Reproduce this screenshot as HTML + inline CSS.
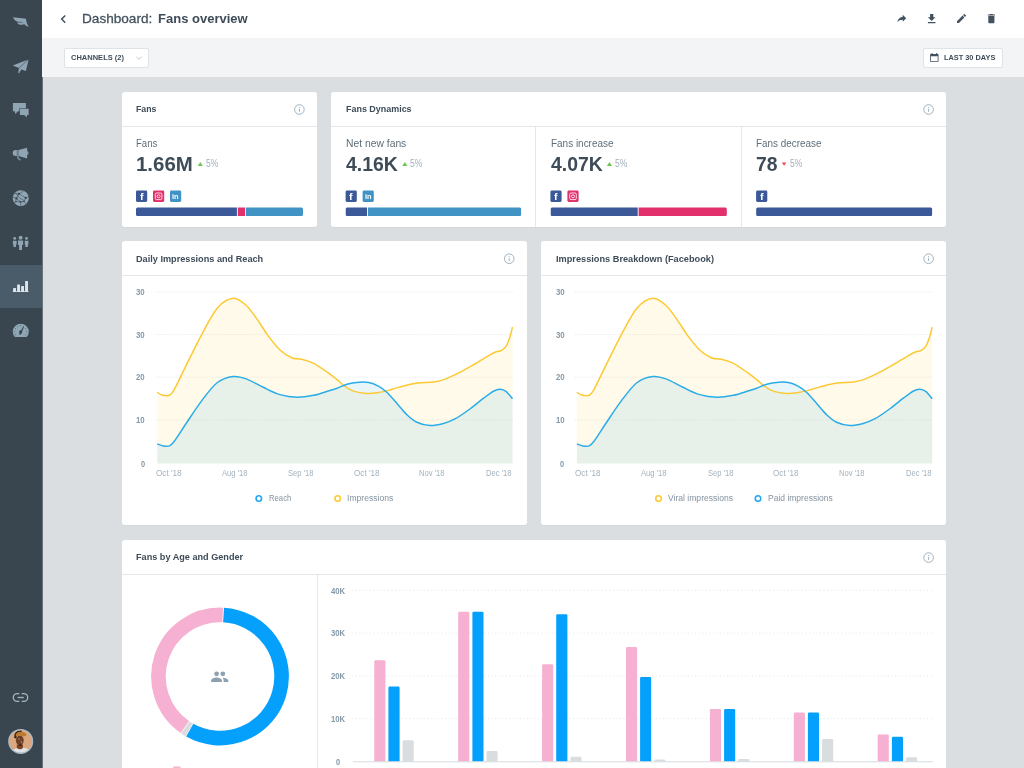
<!DOCTYPE html>
<html lang="en">
<head>
<meta charset="utf-8">
<title>Dashboard: Fans overview</title>
<style>
*{box-sizing:border-box;margin:0;padding:0}
html,body{width:1024px;height:768px;overflow:hidden}
body{background:#dadee1;font-family:"Liberation Sans",sans-serif;position:relative}
.abs{position:absolute}
.sidebar{left:0;top:0;width:42px;height:768px;background:#39464f}
.sidebar-edge{left:42px;top:0;width:1px;height:768px;background:rgba(57,70,79,.7)}
.sidebar .active{left:0;top:264.6px;width:42px;height:43.8px;background:#4a5c69}
.header{left:42px;top:0;width:982px;height:37.6px;background:#fff}
.filters{left:42px;top:37.6px;width:982px;height:39.7px;background:#f3f4f6}
.btn{background:#fff;border:0.8px solid #dfe3e6;border-radius:2px}
.card{background:#fff;border-radius:2.8px;box-shadow:0 0.5px 0.6px rgba(40,55,70,.07)}
.hl{height:0.9px;background:#e3e6ea}
.vl{width:0.9px;background:#e3e6ea}
.t{position:absolute;white-space:nowrap;line-height:1;transform-origin:0 0;font-family:"Liberation Sans",sans-serif}
.seg{position:absolute;top:207.6px;height:8.4px}
.soc{position:absolute;top:190.7px;width:11.2px;height:11.2px;border-radius:1.3px}
svg.ov{position:absolute;left:0;top:0;width:1024px;height:768px;overflow:visible}
</style>
</head>
<body>
<!-- sidebar -->
<nav class="abs sidebar"><div class="abs active"></div></nav>
<div class="abs sidebar-edge"></div>
<!-- top bar -->
<header class="abs header"></header>
<section class="abs filters"></section>
<div class="abs btn" style="left:64.3px;top:48.3px;width:85.2px;height:19.3px"></div>
<div class="abs btn" style="left:923.3px;top:48.3px;width:79.3px;height:19.3px"></div>

<!-- cards -->
<div class="abs card" style="left:121.6px;top:91.6px;width:195.6px;height:135.4px"></div>
<div class="abs card" style="left:331.2px;top:91.6px;width:614.9px;height:135.4px"></div>
<div class="abs card" style="left:121.6px;top:240.7px;width:405.4px;height:284px"></div>
<div class="abs card" style="left:541.2px;top:240.7px;width:404.9px;height:284px"></div>
<div class="abs card" style="left:121.6px;top:539.7px;width:824.5px;height:240px"></div>
<!-- dividers -->
<div class="abs hl" style="left:121.6px;top:126.1px;width:195.6px"></div>
<div class="abs hl" style="left:331.2px;top:126.1px;width:614.9px"></div>
<div class="abs vl" style="left:535.4px;top:126.1px;height:100.9px"></div>
<div class="abs vl" style="left:740.9px;top:126.1px;height:100.9px"></div>
<div class="abs hl" style="left:121.6px;top:274.9px;width:405.4px"></div>
<div class="abs hl" style="left:541.2px;top:274.9px;width:404.9px"></div>
<div class="abs hl" style="left:121.6px;top:574.1px;width:824.5px"></div>
<div class="abs vl" style="left:317.1px;top:574.1px;height:200px"></div>

<!-- social icons -->

<!-- distribution bars -->

<!-- vector overlay: icons + charts -->
<svg class="ov" viewBox="0 0 1024 768">
<g id="side-icons" fill="#8fa5b4">
<!-- wing logo -->
<path d="M12.9,17.2 L26,18.8 C26.2,21.8 27.2,24.6 28.7,26.9 C26.9,26.4 25.2,25.2 24.2,23.9 C22.6,24.9 20.6,25.1 19.2,24.6 C18.3,24.2 17.5,23.5 17.1,22.5 L22.7,22.6 L22.8,22.1 L17.6,21.75 C15.6,21 13.8,19.6 12.9,17.2 Z"/>
<!-- paper plane -->
<path d="M12.75,65.5 L27.6,59.7 L18.9,67.9 Z"/>
<path d="M28.6,59.5 L25.9,71.1 L21.3,69.5 L19.1,73.2 L18.2,72.9 L18.9,68.6 Z"/>
<!-- chats -->
<path d="M12.9,102.9 H25.9 V108.2 H19.3 V111.3 H18 L15.3,113.9 L14.75,111.3 H12.9 Z"/>
<path d="M19.9,108.8 H28.6 V115 H27.1 L26.6,117.3 L24.2,115 H19.9 Z"/>
<!-- megaphone -->
<path d="M16.9,150 H15.7 A3,3 0 0 0 15.7,156 H16.9 Z"/>
<rect x="16.9" y="150" width="1.7" height="6" fill="#6d818e"/>
<path d="M18.6,150 L27.15,147.7 V158.4 L18.6,156 Z"/>
<path d="M27.15,150.9 C28.9,151.2 28.9,154.6 27.15,154.9 Z"/>
<path d="M17.6,156 C17.6,158 18.8,159.5 20.6,160" fill="none" stroke="#768b98" stroke-width="1.5"/>
<!-- globe network -->
<circle cx="20.76" cy="198.2" r="8"/>
<g stroke="#39464f" stroke-width="0.55" fill="none">
<path d="M14.2,193.6 L18.9,193.8 L23.5,191.2 M18.9,193.8 L16.4,198.4 L13,197.2 M18.9,193.8 L25.7,197.9 L28.6,196.6 M16.4,198.4 L15.8,201.5 L14.6,203.4 M16.4,198.4 L20.6,201.9 L23.9,201.5 L25.7,197.9 M15.8,201.5 L20.6,201.9 L20.9,206 M23.9,201.5 L26.4,203.9 M15.5,192.6 C18,197 21,199.6 24.6,200.6"/>
</g>
<g fill="#39464f">
<circle cx="18.94" cy="193.84" r="1.15"/><circle cx="16.4" cy="198.4" r="1.15"/><circle cx="25.7" cy="197.85" r="1.15"/>
<circle cx="15.84" cy="201.5" r="0.7"/><circle cx="20.6" cy="201.9" r="0.85"/><circle cx="23.9" cy="201.5" r="0.7"/>
</g>
<!-- people -->
<circle cx="20.6" cy="237.8" r="2"/><path d="M18,240.4 H23.1 V245.1 H22 V249.9 H19.1 V245.1 H18 Z"/>
<circle cx="14.7" cy="238.4" r="1.45"/><path d="M12.9,240.8 H16.6 V244.4 H16 V247 H13.5 V244.4 H12.9 Z"/>
<circle cx="26.5" cy="238.4" r="1.45"/><path d="M24.8,240.8 H28.4 V244.4 H27.9 V247 H25.3 V244.4 H24.8 Z"/>
<!-- bars (active) -->
<g fill="#dfe4e8">
<rect x="13.1" y="287.9" width="2.9" height="4" rx="0.5"/><rect x="17.1" y="284.4" width="2.9" height="7.5" rx="0.5"/>
<rect x="21.1" y="285.9" width="2.9" height="6" rx="0.5"/><rect x="25.1" y="281.1" width="2.9" height="10.8" rx="0.5"/>
<rect x="12.75" y="291.1" width="15.85" height="0.8"/>
</g>
<!-- gauge -->
<path d="M14.9,337.1 A8,8 0 1 1 26.6,337.1 Z"/>
<g fill="#39464f">
<path d="M19.0,334.5 L23.3,326.2 L24.1,326.6 L20.9,334.6 Z"/><circle cx="20.6" cy="331.9" r="1.55"/>
<circle cx="20.6" cy="325.8" r="0.45"/><circle cx="17.6" cy="326.6" r="0.45"/><circle cx="15.5" cy="328.8" r="0.45"/><circle cx="14.7" cy="331.8" r="0.45"/><circle cx="15.5" cy="334.8" r="0.45"/>
<circle cx="25.8" cy="328.8" r="0.45"/><circle cx="26.6" cy="331.8" r="0.45"/><circle cx="25.8" cy="334.8" r="0.45"/>
</g>
<!-- link -->
<g fill="none" stroke="#a3b7c3" stroke-width="1.35">
<path d="M19.3,693.6 H17.2 A3.9,3.9 0 0 0 17.2,701.4 H19.3"/><path d="M21.7,693.6 H23.8 A3.9,3.9 0 0 1 23.8,701.4 H21.7"/><path d="M17.7,697.5 H23.75"/>
</g>
<!-- avatar -->
<circle cx="20.7" cy="741.4" r="12.5" fill="#a6bccb"/>
<clipPath id="avc"><circle cx="20.7" cy="741.4" r="11.2"/></clipPath>
<g clip-path="url(#avc)">
<rect x="8" y="728" width="26" height="27" fill="#dba77f"/>
<path d="M12.5,755 V750.200 C13.500,749.300 15.500,748.600 16.800,748.100 C18,749 19,749.300 19.900,749.300 C21.300,749.200 22.600,748.500 23.500,747.700 C25.500,748.100 27.500,748.600 29,749.500 V755 Z" fill="#dfe2e6"/>
<path d="M16.800,744.500 H23 V747.800 C22,748.800 21,749.300 19.900,749.300 C18.800,749.300 17.600,748.800 16.800,748.100 Z" fill="#7a4526"/>
<ellipse cx="19.800" cy="740.400" rx="3.900" ry="4.900" fill="#6d3f25"/>
<ellipse cx="20.400" cy="745.100" rx="1.700" ry="0.800" fill="#3a2116"/>
<circle cx="19.050" cy="739.100" r="0.900" fill="#b68564" opacity=".75"/>
<circle cx="21.400" cy="741.900" r="0.750" fill="#d0ab94" opacity=".8"/>
<path d="M14.400,738 C13.700,733 17,730 21.800,730.700 L21.800,732.800 C18.400,732.700 16.600,734.600 16.400,738 C15.800,738.600 14.900,738.600 14.400,738 Z" fill="#2a1d18"/>
<path d="M15.600,736.500 C15.500,733.300 17.400,731.800 20.200,731.800 C23.300,731.800 25.700,732.600 26.600,734.800 C26.500,735.700 25.300,736.300 23.300,736.400 C21,736 18.300,736 15.600,736.500 Z" fill="#ba7b31"/>
</g>

</g>
<g id="top-icons" fill="#425160">
<path d="M65.3,15.5 L61.6,19.1 L65.3,22.7" fill="none" stroke="#465563" stroke-width="1.5"/>
<path transform="translate(907.68,12.33) scale(-0.494,0.494)" d="M10 9V5l-7 7 7 7v-4.1c5 0 8.500 1.600 11 5.100-1-5-4-10-11-11z"/>
<path transform="translate(925.2,12.4) scale(0.54)" d="M19 9h-4V3H9v6H5l7 7 7-7zM5 18v2h14v-2H5z"/>
<path transform="translate(955.5,12.5) scale(0.5)" d="M3 17.250V21h3.750L17.810 9.940l-3.750-3.750L3 17.250zM20.710 7.040c.390-.390.390-1.020 0-1.410l-2.340-2.340c-.390-.390-1.020-.390-1.410 0l-1.830 1.830 3.750 3.750 1.830-1.830z"/>
<path transform="translate(985.25,12.47) scale(0.51)" d="M6 19c0 1.100.900 2 2 2h8c1.100 0 2-.900 2-2V7H6v12zM19 4h-3.500l-1-1h-5l-1 1H5v2h14V4z"/>
<path d="M136.3,56.6 L139,59.3 L141.7,56.6" fill="none" stroke="#b7c2ca" stroke-width="0.9"/>
<!-- calendar -->
<path d="M930.6,54.1 H938 a0.5,0.5 0 0 1 0.5,0.5 V61.3 a0.5,0.5 0 0 1 -0.5,0.5 H930.6 a0.5,0.5 0 0 1 -0.5,-0.5 V54.6 a0.5,0.5 0 0 1 0.500,-0.500 Z M930.9,56.3 V61.000 H937.700 V56.300 Z" fill-rule="evenodd"/>
<rect x="931.4" y="53.2" width="1.2" height="1.200"/><rect x="936" y="53.2" width="1.2" height="1.200"/>
</g>
<g id="info" fill="none" stroke="#9fb2c0" stroke-width="1">
<circle cx="299.4" cy="109.5" r="4.800"/><circle cx="928.600" cy="109.500" r="4.800"/>
<circle cx="509.200" cy="258.700" r="4.800"/><circle cx="928.600" cy="258.700" r="4.800"/><circle cx="928.600" cy="557.600" r="4.800"/>
<path d="M299.4,108.900V111.800M928.600,108.900V111.800M509.200,258.100V261M928.600,258.100V261M928.600,557V559.900" stroke-width="1"/>
<path d="M299.4,106.900V107.900M928.600,106.900V107.900M509.200,256.100V257.100M928.600,256.100V257.100M928.600,555V556" stroke-width="1"/>
</g>
<g id="trend">
<path d="M197.700,165.900 H202.800 L200.250,162 Z" fill="#6cc650"/>
<path d="M402.300,165.900 H407.400 L404.850,162 Z" fill="#6cc650"/>
<path d="M606.900,165.900 H612 L609.450,162 Z" fill="#6cc650"/>
<path d="M781.800,162.600 H786.400 L784.100,165.800 Z" fill="#ef4a4a"/>
</g>
<!-- donut centre people -->
<g fill="#8ca1b2">
<circle cx="216.6" cy="673.8" r="2.4"/><circle cx="222.8" cy="673.8" r="2.4"/>
<path d="M211.1,682.1 V680.6 C211.1,678.6 214.5,677.6 216.5,677.6 C218.500,677.600 221.900,678.600 221.900,680.600 V682.100 Z"/>
<path d="M223.600,682.100 V680.500 C223.600,679.300 223.200,678.400 222.600,677.700 C224.900,677.600 228.300,678.600 228.300,680.600 V682.100 Z"/>
</g>
<rect x="173.200" y="766.600" width="7.400" height="7" rx="0.800" fill="#f6b0d1"/>

<g id="social">
<rect x="136" y="190.6" width="11.2" height="11.3" rx="1.3" fill="#3b5998"/>
<rect x="153" y="190.6" width="11.2" height="11.3" rx="1.3" fill="#e1306c"/>
<rect x="170" y="190.6" width="11.2" height="11.3" rx="1.3" fill="#4193c5"/>
<rect x="345.6" y="190.6" width="11.2" height="11.3" rx="1.3" fill="#3b5998"/>
<rect x="362.6" y="190.6" width="11.2" height="11.3" rx="1.3" fill="#4193c5"/>
<rect x="550.4" y="190.6" width="11.2" height="11.3" rx="1.3" fill="#3b5998"/>
<rect x="567.4" y="190.6" width="11.2" height="11.3" rx="1.3" fill="#e1306c"/>
<rect x="756.1" y="190.6" width="11.2" height="11.3" rx="1.3" fill="#3b5998"/>
</g>
<g id="dist">
<clipPath id="bc0"><rect x="136.0" y="207.5" width="167.0" height="8.6" rx="1.6"/></clipPath>
<clipPath id="bc1"><rect x="345.5" y="207.5" width="175.8" height="8.6" rx="1.6"/></clipPath>
<clipPath id="bc2"><rect x="550.5" y="207.5" width="176.4" height="8.6" rx="1.6"/></clipPath>
<clipPath id="bc3"><rect x="756.1" y="207.5" width="176.2" height="8.6" rx="1.6"/></clipPath>
<rect x="136.0" y="207" width="100.9" height="10" fill="#3b5998" clip-path="url(#bc0)"/>
<rect x="237.8" y="207" width="7.3" height="10" fill="#e1306c" clip-path="url(#bc0)"/>
<rect x="246.0" y="207" width="57" height="10" fill="#4193c5" clip-path="url(#bc0)"/>
<rect x="345.5" y="207" width="21.5" height="10" fill="#3b5998" clip-path="url(#bc1)"/>
<rect x="367.9" y="207" width="153.4" height="10" fill="#4193c5" clip-path="url(#bc1)"/>
<rect x="550.5" y="207" width="87.2" height="10" fill="#3b5998" clip-path="url(#bc2)"/>
<rect x="638.6" y="207" width="88.3" height="10" fill="#e1306c" clip-path="url(#bc2)"/>
<rect x="756.1" y="207" width="176.2" height="10" fill="#3b5998" clip-path="url(#bc3)"/>
</g>
<!-- instagram glyphs -->
<g fill="none" stroke="#fff" stroke-width="0.8">
<rect x="155.300" y="193" width="6.600" height="6.600" rx="1.300"/><circle cx="158.600" cy="196.300" r="1.500"/>
<rect x="569.700" y="193" width="6.600" height="6.600" rx="1.300"/><circle cx="573" cy="196.300" r="1.500"/>
</g>
<g id="charts">
<line x1="155.5" x2="512.6" y1="291.9" y2="291.9" stroke="#dfe3e7" stroke-width="0.8" stroke-dasharray="1.2 1.65"/>
<line x1="155.5" x2="512.6" y1="334.5" y2="334.5" stroke="#dfe3e7" stroke-width="0.8" stroke-dasharray="1.2 1.65"/>
<line x1="155.5" x2="512.6" y1="377.2" y2="377.2" stroke="#dfe3e7" stroke-width="0.8" stroke-dasharray="1.2 1.65"/>
<line x1="155.5" x2="512.6" y1="419.9" y2="419.9" stroke="#dfe3e7" stroke-width="0.8" stroke-dasharray="1.2 1.65"/>
<path d="M157.2,392.2C158.0,392.7 160.0,394.5 162.0,395.0C164.0,395.5 167.3,396.2 169.3,395.3C171.3,394.4 172.1,393.1 174.1,389.8C176.1,386.5 176.7,384.5 181.3,375.3C185.9,366.1 195.8,345.6 201.8,334.4C207.8,323.2 212.2,313.9 217.4,307.9C222.6,301.9 228.3,298.6 233.1,298.2C237.9,297.8 242.1,301.7 246.3,305.5C250.5,309.3 254.8,316.1 258.4,321.1C262.0,326.1 264.4,330.8 268.0,335.6C271.6,340.4 276.0,346.3 280.0,350.0C284.0,353.7 288.5,356.5 292.1,358.0C295.7,359.5 298.1,358.3 301.7,359.2C305.3,360.1 309.4,361.0 313.8,363.3C318.2,365.6 324.3,370.2 328.2,372.9C332.1,375.6 334.3,377.4 337.0,379.6C339.7,381.8 341.7,384.1 344.6,386.1C347.5,388.1 350.7,390.2 354.3,391.4C357.9,392.6 362.3,393.2 366.3,393.4C370.3,393.6 374.3,393.2 378.3,392.6C382.3,392.0 385.6,391.1 390.4,389.8C395.2,388.5 402.4,386.1 407.2,384.9C412.0,383.7 414.9,383.3 419.3,382.8C423.7,382.3 429.3,382.6 433.7,382.0C438.1,381.4 441.4,380.5 445.8,378.9C450.2,377.3 455.4,374.7 460.2,372.2C465.0,369.7 469.9,366.8 474.7,364.0C479.5,361.2 485.5,357.4 489.1,355.3C492.7,353.2 494.3,352.5 496.3,351.7C498.3,350.9 499.6,351.6 501.2,350.7C502.8,349.8 504.6,348.5 506.0,346.4C507.4,344.3 508.5,341.2 509.6,338.0C510.7,334.8 512.0,328.9 512.5,327.1L512.5,463.6L157.2,463.6Z" fill="#fbd23c" fill-opacity="0.11"/>
<path d="M157.2,443.9C158.2,444.2 161.2,445.6 163.2,445.9C165.2,446.2 167.5,446.6 169.3,445.9C171.1,445.2 171.3,445.2 174.1,441.5C176.9,437.8 181.5,430.3 186.1,423.5C190.7,416.7 196.6,407.4 201.8,400.6C207.0,393.8 212.2,386.5 217.4,382.5C222.6,378.5 228.3,377.1 233.1,376.5C237.9,375.9 241.3,377.1 246.3,378.9C251.3,380.7 257.6,384.7 263.2,387.3C268.8,389.9 274.4,393.0 280.0,394.6C285.6,396.2 291.3,397.1 296.9,397.2C302.5,397.3 308.6,396.3 313.8,395.3C319.0,394.3 324.3,392.2 328.2,391.0C332.1,389.8 333.9,389.3 337.0,388.2C340.1,387.1 343.3,385.2 347.0,384.2C350.7,383.2 355.5,382.6 359.1,382.3C362.7,382.0 365.5,381.9 368.7,382.5C371.9,383.1 375.3,384.5 378.3,386.1C381.3,387.7 383.6,389.2 386.8,392.2C390.0,395.2 394.2,400.4 397.6,404.2C401.0,408.0 404.0,412.0 407.2,415.0C410.4,418.0 413.1,420.5 416.9,422.3C420.7,424.1 425.7,425.4 430.1,425.6C434.5,425.8 439.2,424.6 443.4,423.5C447.6,422.4 451.0,421.1 455.4,418.7C459.8,416.3 465.1,412.5 469.9,409.0C474.7,405.5 480.3,400.7 484.3,397.7C488.3,394.7 491.3,392.4 493.9,391.0C496.5,389.6 498.0,389.2 500.0,389.3C502.0,389.4 503.9,389.8 506.0,391.4C508.1,393.0 511.4,397.5 512.5,398.7L512.5,463.6L157.2,463.6Z" fill="#2aa9e6" fill-opacity="0.11"/>
<path d="M157.2,392.2C158.0,392.7 160.0,394.5 162.0,395.0C164.0,395.5 167.3,396.2 169.3,395.3C171.3,394.4 172.1,393.1 174.1,389.8C176.1,386.5 176.7,384.5 181.3,375.3C185.9,366.1 195.8,345.6 201.8,334.4C207.8,323.2 212.2,313.9 217.4,307.9C222.6,301.9 228.3,298.6 233.1,298.2C237.9,297.8 242.1,301.7 246.3,305.5C250.5,309.3 254.8,316.1 258.4,321.1C262.0,326.1 264.4,330.8 268.0,335.6C271.6,340.4 276.0,346.3 280.0,350.0C284.0,353.7 288.5,356.5 292.1,358.0C295.7,359.5 298.1,358.3 301.7,359.2C305.3,360.1 309.4,361.0 313.8,363.3C318.2,365.6 324.3,370.2 328.2,372.9C332.1,375.6 334.3,377.4 337.0,379.6C339.7,381.8 341.7,384.1 344.6,386.1C347.5,388.1 350.7,390.2 354.3,391.4C357.9,392.6 362.3,393.2 366.3,393.4C370.3,393.6 374.3,393.2 378.3,392.6C382.3,392.0 385.6,391.1 390.4,389.8C395.2,388.5 402.4,386.1 407.2,384.9C412.0,383.7 414.9,383.3 419.3,382.8C423.7,382.3 429.3,382.6 433.7,382.0C438.1,381.4 441.4,380.5 445.8,378.9C450.2,377.3 455.4,374.7 460.2,372.2C465.0,369.7 469.9,366.8 474.7,364.0C479.5,361.2 485.5,357.4 489.1,355.3C492.7,353.2 494.3,352.5 496.3,351.7C498.3,350.9 499.6,351.6 501.2,350.7C502.8,349.8 504.6,348.5 506.0,346.4C507.4,344.3 508.5,341.2 509.6,338.0C510.7,334.8 512.0,328.9 512.5,327.1" fill="none" stroke="#fcc932" stroke-width="1.5"/>
<path d="M157.2,443.9C158.2,444.2 161.2,445.6 163.2,445.9C165.2,446.2 167.5,446.6 169.3,445.9C171.1,445.2 171.3,445.2 174.1,441.5C176.9,437.8 181.5,430.3 186.1,423.5C190.7,416.7 196.6,407.4 201.8,400.6C207.0,393.8 212.2,386.5 217.4,382.5C222.6,378.5 228.3,377.1 233.1,376.5C237.9,375.9 241.3,377.1 246.3,378.9C251.3,380.7 257.6,384.7 263.2,387.3C268.8,389.9 274.4,393.0 280.0,394.6C285.6,396.2 291.3,397.1 296.9,397.2C302.5,397.3 308.6,396.3 313.8,395.3C319.0,394.3 324.3,392.2 328.2,391.0C332.1,389.8 333.9,389.3 337.0,388.2C340.1,387.1 343.3,385.2 347.0,384.2C350.7,383.2 355.5,382.6 359.1,382.3C362.7,382.0 365.5,381.9 368.7,382.5C371.9,383.1 375.3,384.5 378.3,386.1C381.3,387.7 383.6,389.2 386.8,392.2C390.0,395.2 394.2,400.4 397.6,404.2C401.0,408.0 404.0,412.0 407.2,415.0C410.4,418.0 413.1,420.5 416.9,422.3C420.7,424.1 425.7,425.4 430.1,425.6C434.5,425.8 439.2,424.6 443.4,423.5C447.6,422.4 451.0,421.1 455.4,418.7C459.8,416.3 465.1,412.5 469.9,409.0C474.7,405.5 480.3,400.7 484.3,397.7C488.3,394.7 491.3,392.4 493.9,391.0C496.5,389.6 498.0,389.2 500.0,389.3C502.0,389.4 503.9,389.8 506.0,391.4C508.1,393.0 511.4,397.5 512.5,398.7" fill="none" stroke="#2aace8" stroke-width="1.5"/>
<line x1="575.2" x2="932.3" y1="291.9" y2="291.9" stroke="#dfe3e7" stroke-width="0.8" stroke-dasharray="1.2 1.65"/>
<line x1="575.2" x2="932.3" y1="334.5" y2="334.5" stroke="#dfe3e7" stroke-width="0.8" stroke-dasharray="1.2 1.65"/>
<line x1="575.2" x2="932.3" y1="377.2" y2="377.2" stroke="#dfe3e7" stroke-width="0.8" stroke-dasharray="1.2 1.65"/>
<line x1="575.2" x2="932.3" y1="419.9" y2="419.9" stroke="#dfe3e7" stroke-width="0.8" stroke-dasharray="1.2 1.65"/>
<path d="M576.9,392.2C577.7,392.7 579.7,394.5 581.7,395.0C583.7,395.5 587.0,396.2 589.0,395.3C591.0,394.4 591.8,393.1 593.8,389.8C595.8,386.5 596.4,384.5 601.0,375.3C605.6,366.1 615.5,345.6 621.5,334.4C627.5,323.2 631.9,313.9 637.1,307.9C642.3,301.9 648.0,298.6 652.8,298.2C657.6,297.8 661.8,301.7 666.0,305.5C670.2,309.3 674.5,316.1 678.1,321.1C681.7,326.1 684.1,330.8 687.7,335.6C691.3,340.4 695.7,346.3 699.7,350.0C703.7,353.7 708.2,356.5 711.8,358.0C715.4,359.5 717.8,358.3 721.4,359.2C725.0,360.1 729.1,361.0 733.5,363.3C737.9,365.6 744.0,370.2 747.9,372.9C751.8,375.6 754.0,377.4 756.7,379.6C759.4,381.8 761.4,384.1 764.3,386.1C767.2,388.1 770.4,390.2 774.0,391.4C777.6,392.6 782.0,393.2 786.0,393.4C790.0,393.6 794.0,393.2 798.0,392.6C802.0,392.0 805.3,391.1 810.1,389.8C814.9,388.5 822.1,386.1 826.9,384.9C831.7,383.7 834.6,383.3 839.0,382.8C843.4,382.3 849.0,382.6 853.4,382.0C857.8,381.4 861.1,380.5 865.5,378.9C869.9,377.3 875.1,374.7 879.9,372.2C884.7,369.7 889.6,366.8 894.4,364.0C899.2,361.2 905.2,357.4 908.8,355.3C912.4,353.2 914.0,352.5 916.0,351.7C918.0,350.9 919.3,351.6 920.9,350.7C922.5,349.8 924.3,348.5 925.7,346.4C927.1,344.3 928.2,341.2 929.3,338.0C930.4,334.8 931.7,328.9 932.2,327.1L932.2,463.6L576.9,463.6Z" fill="#fbd23c" fill-opacity="0.11"/>
<path d="M576.9,443.9C577.9,444.2 580.9,445.6 582.9,445.9C584.9,446.2 587.2,446.6 589.0,445.9C590.8,445.2 591.0,445.2 593.8,441.5C596.6,437.8 601.2,430.3 605.8,423.5C610.4,416.7 616.3,407.4 621.5,400.6C626.7,393.8 631.9,386.5 637.1,382.5C642.3,378.5 648.0,377.1 652.8,376.5C657.6,375.9 661.0,377.1 666.0,378.9C671.0,380.7 677.3,384.7 682.9,387.3C688.5,389.9 694.1,393.0 699.7,394.6C705.3,396.2 711.0,397.1 716.6,397.2C722.2,397.3 728.3,396.3 733.5,395.3C738.7,394.3 744.0,392.2 747.9,391.0C751.8,389.8 753.6,389.3 756.7,388.2C759.8,387.1 763.0,385.2 766.7,384.2C770.4,383.2 775.2,382.6 778.8,382.3C782.4,382.0 785.2,381.9 788.4,382.5C791.6,383.1 795.0,384.5 798.0,386.1C801.0,387.7 803.3,389.2 806.5,392.2C809.7,395.2 813.9,400.4 817.3,404.2C820.7,408.0 823.7,412.0 826.9,415.0C830.1,418.0 832.8,420.5 836.6,422.3C840.4,424.1 845.4,425.4 849.8,425.6C854.2,425.8 858.9,424.6 863.1,423.5C867.3,422.4 870.7,421.1 875.1,418.7C879.5,416.3 884.8,412.5 889.6,409.0C894.4,405.5 900.0,400.7 904.0,397.7C908.0,394.7 911.0,392.4 913.6,391.0C916.2,389.6 917.7,389.2 919.7,389.3C921.7,389.4 923.6,389.8 925.7,391.4C927.8,393.0 931.1,397.5 932.2,398.7L932.2,463.6L576.9,463.6Z" fill="#2aa9e6" fill-opacity="0.11"/>
<path d="M576.9,392.2C577.7,392.7 579.7,394.5 581.7,395.0C583.7,395.5 587.0,396.2 589.0,395.3C591.0,394.4 591.8,393.1 593.8,389.8C595.8,386.5 596.4,384.5 601.0,375.3C605.6,366.1 615.5,345.6 621.5,334.4C627.5,323.2 631.9,313.9 637.1,307.9C642.3,301.9 648.0,298.6 652.8,298.2C657.6,297.8 661.8,301.7 666.0,305.5C670.2,309.3 674.5,316.1 678.1,321.1C681.7,326.1 684.1,330.8 687.7,335.6C691.3,340.4 695.7,346.3 699.7,350.0C703.7,353.7 708.2,356.5 711.8,358.0C715.4,359.5 717.8,358.3 721.4,359.2C725.0,360.1 729.1,361.0 733.5,363.3C737.9,365.6 744.0,370.2 747.9,372.9C751.8,375.6 754.0,377.4 756.7,379.6C759.4,381.8 761.4,384.1 764.3,386.1C767.2,388.1 770.4,390.2 774.0,391.4C777.6,392.6 782.0,393.2 786.0,393.4C790.0,393.6 794.0,393.2 798.0,392.6C802.0,392.0 805.3,391.1 810.1,389.8C814.9,388.5 822.1,386.1 826.9,384.9C831.7,383.7 834.6,383.3 839.0,382.8C843.4,382.3 849.0,382.6 853.4,382.0C857.8,381.4 861.1,380.5 865.5,378.9C869.9,377.3 875.1,374.7 879.9,372.2C884.7,369.7 889.6,366.8 894.4,364.0C899.2,361.2 905.2,357.4 908.8,355.3C912.4,353.2 914.0,352.5 916.0,351.7C918.0,350.9 919.3,351.6 920.9,350.7C922.5,349.8 924.3,348.5 925.7,346.4C927.1,344.3 928.2,341.2 929.3,338.0C930.4,334.8 931.7,328.9 932.2,327.1" fill="none" stroke="#fcc932" stroke-width="1.5"/>
<path d="M576.9,443.9C577.9,444.2 580.9,445.6 582.9,445.9C584.9,446.2 587.2,446.6 589.0,445.9C590.8,445.2 591.0,445.2 593.8,441.5C596.6,437.8 601.2,430.3 605.8,423.5C610.4,416.7 616.3,407.4 621.5,400.6C626.7,393.8 631.9,386.5 637.1,382.5C642.3,378.5 648.0,377.1 652.8,376.5C657.6,375.9 661.0,377.1 666.0,378.9C671.0,380.7 677.3,384.7 682.9,387.3C688.5,389.9 694.1,393.0 699.7,394.6C705.3,396.2 711.0,397.1 716.6,397.2C722.2,397.3 728.3,396.3 733.5,395.3C738.7,394.3 744.0,392.2 747.9,391.0C751.8,389.8 753.6,389.3 756.7,388.2C759.8,387.1 763.0,385.2 766.7,384.2C770.4,383.2 775.2,382.6 778.8,382.3C782.4,382.0 785.2,381.9 788.4,382.5C791.6,383.1 795.0,384.5 798.0,386.1C801.0,387.7 803.3,389.2 806.5,392.2C809.7,395.2 813.9,400.4 817.3,404.2C820.7,408.0 823.7,412.0 826.9,415.0C830.1,418.0 832.8,420.5 836.6,422.3C840.4,424.1 845.4,425.4 849.8,425.6C854.2,425.8 858.9,424.6 863.1,423.5C867.3,422.4 870.7,421.1 875.1,418.7C879.5,416.3 884.8,412.5 889.6,409.0C894.4,405.5 900.0,400.7 904.0,397.7C908.0,394.7 911.0,392.4 913.6,391.0C916.2,389.6 917.7,389.2 919.7,389.3C921.7,389.4 923.6,389.8 925.7,391.4C927.8,393.0 931.1,397.5 932.2,398.7" fill="none" stroke="#2aace8" stroke-width="1.5"/>
<circle cx="258.8" cy="498.5" r="2.75" fill="#fff" stroke="#22a9f2" stroke-width="1.6"/><circle cx="337.7" cy="498.5" r="2.75" fill="#fff" stroke="#fdc935" stroke-width="1.6"/><circle cx="658.5" cy="498.5" r="2.75" fill="#fff" stroke="#fdc935" stroke-width="1.6"/><circle cx="758.0" cy="498.5" r="2.75" fill="#fff" stroke="#22a9f2" stroke-width="1.6"/>
</g>
<g id="donut">
<path d="M223.55,615.00A61.6,61.6 0 1 1 189.76,730.17" fill="none" stroke="#04a0fb" stroke-width="14.6"/>
<path d="M189.29,729.90A61.6,61.6 0 0 1 185.29,727.39" fill="none" stroke="#d9dde0" stroke-width="14.6"/>
<path d="M184.84,727.08A61.6,61.6 0 0 1 222.69,614.96" fill="none" stroke="#f6b0d1" stroke-width="14.6"/>
</g>
<g id="bars">
<line x1="352.2" x2="932.7" y1="590.3" y2="590.3" stroke="#dde1e5" stroke-width="0.8" stroke-dasharray="1.1 2.47"/>
<line x1="352.2" x2="932.7" y1="633.1" y2="633.1" stroke="#dde1e5" stroke-width="0.8" stroke-dasharray="1.1 2.47"/>
<line x1="352.2" x2="932.7" y1="675.9" y2="675.9" stroke="#dde1e5" stroke-width="0.8" stroke-dasharray="1.1 2.47"/>
<line x1="352.2" x2="932.7" y1="718.7" y2="718.7" stroke="#dde1e5" stroke-width="0.8" stroke-dasharray="1.1 2.47"/>
<path d="M374.3,761.5V661.5Q374.3,660.2 375.6,660.2H384.1Q385.4,660.2 385.4,661.5V761.5Z" fill="#f6b0d1"/>
<path d="M388.4,761.5V687.8Q388.4,686.5 389.8,686.5H398.2Q399.6,686.5 399.6,687.8V761.5Z" fill="#04a0fb"/>
<path d="M402.6,761.5V741.6Q402.6,740.3 403.9,740.3H412.4Q413.7,740.3 413.7,741.6V761.5Z" fill="#d9dde0"/>
<path d="M458.2,761.5V613.0Q458.2,611.7 459.5,611.7H468.0Q469.3,611.7 469.3,613.0V761.5Z" fill="#f6b0d1"/>
<path d="M472.4,761.5V613.0Q472.4,611.7 473.7,611.7H482.2Q483.5,611.7 483.5,613.0V761.5Z" fill="#04a0fb"/>
<path d="M486.5,761.5V752.4Q486.5,751.1 487.8,751.1H496.3Q497.6,751.1 497.6,752.4V761.5Z" fill="#d9dde0"/>
<path d="M542.1,761.5V665.6Q542.1,664.3 543.4,664.3H551.9Q553.2,664.3 553.2,665.6V761.5Z" fill="#f6b0d1"/>
<path d="M556.2,761.5V615.6Q556.2,614.3 557.5,614.3H566.1Q567.4,614.3 567.4,615.6V761.5Z" fill="#04a0fb"/>
<path d="M570.4,761.5V758.1Q570.4,756.8 571.7,756.8H580.2Q581.5,756.8 581.5,758.1V761.5Z" fill="#d9dde0"/>
<path d="M626.0,761.5V648.3Q626.0,647.0 627.3,647.0H635.8Q637.1,647.0 637.1,648.3V761.5Z" fill="#f6b0d1"/>
<path d="M640.1,761.5V678.2Q640.1,676.9 641.4,676.9H650.0Q651.2,676.9 651.2,678.2V761.5Z" fill="#04a0fb"/>
<path d="M654.3,761.5V760.9Q654.3,759.6 655.6,759.6H664.1Q665.4,759.6 665.4,760.9V761.5Z" fill="#d9dde0"/>
<path d="M709.9,761.5V710.4Q709.9,709.1 711.2,709.1H719.7Q721.0,709.1 721.0,710.4V761.5Z" fill="#f6b0d1"/>
<path d="M724.1,761.5V710.4Q724.1,709.1 725.4,709.1H733.9Q735.2,709.1 735.2,710.4V761.5Z" fill="#04a0fb"/>
<path d="M738.2,761.5V760.2Q738.2,758.9 739.5,758.9H748.0Q749.3,758.9 749.3,760.2V761.5Z" fill="#d9dde0"/>
<path d="M793.8,761.5V713.8Q793.8,712.5 795.1,712.5H803.6Q804.9,712.5 804.9,713.8V761.5Z" fill="#f6b0d1"/>
<path d="M807.9,761.5V713.8Q807.9,712.5 809.2,712.5H817.8Q819.0,712.5 819.0,713.8V761.5Z" fill="#04a0fb"/>
<path d="M822.1,761.5V740.3Q822.1,739.0 823.4,739.0H831.9Q833.2,739.0 833.2,740.3V761.5Z" fill="#d9dde0"/>
<path d="M877.7,761.5V735.7Q877.7,734.4 879.0,734.4H887.5Q888.8,734.4 888.8,735.7V761.5Z" fill="#f6b0d1"/>
<path d="M891.9,761.5V738.0Q891.9,736.7 893.1,736.7H901.7Q903.0,736.7 903.0,738.0V761.5Z" fill="#04a0fb"/>
<path d="M906.0,761.5V758.6Q906.0,757.3 907.3,757.3H915.8Q917.1,757.3 917.1,758.6V761.5Z" fill="#d9dde0"/>
<line x1="352.9" x2="932.7" y1="761.8" y2="761.8" stroke="#d3d8dc" stroke-width="0.9"/>
</g>
</svg>

<!-- text -->
<div id="labels" style="position:absolute;left:0;top:0;width:1024px;height:768px;will-change:transform">
<span class="t" style="left:82.20px;top:12.14px;font-size:13.3px;font-weight:400;color:#44525e;-webkit-text-stroke:0.3px #44525e;transform:scaleX(1.0225)">Dashboard:</span>
<span class="t" style="left:158.40px;top:12.14px;font-size:13.3px;font-weight:700;color:#3e4c58;transform:scaleX(0.9787)">Fans overview</span>
<span class="t" style="left:70.90px;top:54.08px;font-size:7.7px;font-weight:700;color:#3e4c58;transform:scaleX(0.9770)">CHANNELS (2)</span>
<span class="t" style="left:944.00px;top:54.38px;font-size:7.7px;font-weight:700;color:#3e4c58;transform:scaleX(0.9580)">LAST 30 DAYS</span>
<span class="t" style="left:136.00px;top:105.19px;font-size:8.4px;font-weight:700;color:#3e4c58;transform:scaleX(1.0428)">Fans</span>
<span class="t" style="left:345.90px;top:105.19px;font-size:8.4px;font-weight:700;color:#3e4c58;transform:scaleX(1.0675)">Fans Dynamics</span>
<span class="t" style="left:136.00px;top:254.89px;font-size:8.4px;font-weight:700;color:#3e4c58;transform:scaleX(1.0930)">Daily Impressions and Reach</span>
<span class="t" style="left:555.70px;top:254.89px;font-size:8.4px;font-weight:700;color:#3e4c58;transform:scaleX(1.0987)">Impressions Breakdown (Facebook)</span>
<span class="t" style="left:135.80px;top:553.09px;font-size:8.4px;font-weight:700;color:#3e4c58;transform:scaleX(1.0889)">Fans by Age and Gender</span>
<span class="t" style="left:136.00px;top:137.74px;font-size:10.7px;font-weight:400;color:#5d6e7a;transform:scaleX(0.8920)">Fans</span>
<span class="t" style="left:136.00px;top:154.72px;font-size:19.7px;font-weight:700;color:#3e4c58;transform:scaleX(1.0380)">1.66M</span>
<span class="t" style="left:205.70px;top:158.01px;font-size:10.5px;font-weight:400;color:#a3b2be;transform:scaleX(0.8099)">5%</span>
<span class="t" style="left:345.90px;top:137.74px;font-size:10.7px;font-weight:400;color:#5d6e7a;transform:scaleX(0.9665)">Net new fans</span>
<span class="t" style="left:345.90px;top:154.72px;font-size:19.7px;font-weight:700;color:#3e4c58;transform:scaleX(0.9877)">4.16K</span>
<span class="t" style="left:409.70px;top:158.01px;font-size:10.5px;font-weight:400;color:#a3b2be;transform:scaleX(0.8099)">5%</span>
<span class="t" style="left:550.50px;top:137.74px;font-size:10.7px;font-weight:400;color:#5d6e7a;transform:scaleX(0.9309)">Fans increase</span>
<span class="t" style="left:550.50px;top:154.72px;font-size:19.7px;font-weight:700;color:#3e4c58;transform:scaleX(0.9877)">4.07K</span>
<span class="t" style="left:614.70px;top:158.01px;font-size:10.5px;font-weight:400;color:#a3b2be;transform:scaleX(0.8099)">5%</span>
<span class="t" style="left:756.10px;top:137.74px;font-size:10.7px;font-weight:400;color:#5d6e7a;transform:scaleX(0.9250)">Fans decrease</span>
<span class="t" style="left:756.10px;top:154.72px;font-size:19.7px;font-weight:700;color:#3e4c58;transform:scaleX(0.9815)">78</span>
<span class="t" style="left:789.60px;top:158.01px;font-size:10.5px;font-weight:400;color:#a3b2be;transform:scaleX(0.8099)">5%</span>
<span class="t" style="left:135.90px;top:289.16px;font-size:8.2px;font-weight:700;color:#8499a9;transform:scaleX(0.9551)">30</span>
<span class="t" style="left:135.90px;top:331.76px;font-size:8.2px;font-weight:700;color:#8499a9;transform:scaleX(0.9551)">30</span>
<span class="t" style="left:135.90px;top:374.46px;font-size:8.2px;font-weight:700;color:#8499a9;transform:scaleX(0.9551)">20</span>
<span class="t" style="left:135.90px;top:417.16px;font-size:8.2px;font-weight:700;color:#8499a9;transform:scaleX(0.9551)">10</span>
<span class="t" style="left:140.50px;top:460.86px;font-size:8.2px;font-weight:700;color:#8499a9;transform:scaleX(0.8986)">0</span>
<span class="t" style="left:155.60px;top:469.47px;font-size:8.3px;font-weight:400;color:#a3b2be;transform:scaleX(0.9834)">Oct '18</span>
<span class="t" style="left:221.70px;top:469.47px;font-size:8.3px;font-weight:400;color:#a3b2be;transform:scaleX(0.9179)">Aug '18</span>
<span class="t" style="left:287.80px;top:469.47px;font-size:8.3px;font-weight:400;color:#a3b2be;transform:scaleX(0.9179)">Sep '18</span>
<span class="t" style="left:353.60px;top:469.47px;font-size:8.3px;font-weight:400;color:#a3b2be;transform:scaleX(0.9834)">Oct '18</span>
<span class="t" style="left:419.10px;top:469.47px;font-size:8.3px;font-weight:400;color:#a3b2be;transform:scaleX(0.9184)">Nov '18</span>
<span class="t" style="left:486.10px;top:469.47px;font-size:8.3px;font-weight:400;color:#a3b2be;transform:scaleX(0.9184)">Dec '18</span>
<span class="t" style="left:555.60px;top:289.16px;font-size:8.2px;font-weight:700;color:#8499a9;transform:scaleX(0.9551)">30</span>
<span class="t" style="left:555.60px;top:331.76px;font-size:8.2px;font-weight:700;color:#8499a9;transform:scaleX(0.9551)">30</span>
<span class="t" style="left:555.60px;top:374.46px;font-size:8.2px;font-weight:700;color:#8499a9;transform:scaleX(0.9551)">20</span>
<span class="t" style="left:555.60px;top:417.16px;font-size:8.2px;font-weight:700;color:#8499a9;transform:scaleX(0.9551)">10</span>
<span class="t" style="left:560.20px;top:460.86px;font-size:8.2px;font-weight:700;color:#8499a9;transform:scaleX(0.8986)">0</span>
<span class="t" style="left:575.30px;top:469.47px;font-size:8.3px;font-weight:400;color:#a3b2be;transform:scaleX(0.9834)">Oct '18</span>
<span class="t" style="left:641.40px;top:469.47px;font-size:8.3px;font-weight:400;color:#a3b2be;transform:scaleX(0.9179)">Aug '18</span>
<span class="t" style="left:707.50px;top:469.47px;font-size:8.3px;font-weight:400;color:#a3b2be;transform:scaleX(0.9179)">Sep '18</span>
<span class="t" style="left:773.30px;top:469.47px;font-size:8.3px;font-weight:400;color:#a3b2be;transform:scaleX(0.9834)">Oct '18</span>
<span class="t" style="left:838.80px;top:469.47px;font-size:8.3px;font-weight:400;color:#a3b2be;transform:scaleX(0.9184)">Nov '18</span>
<span class="t" style="left:905.80px;top:469.47px;font-size:8.3px;font-weight:400;color:#a3b2be;transform:scaleX(0.9184)">Dec '18</span>
<span class="t" style="left:268.50px;top:493.27px;font-size:9.6px;font-weight:400;color:#8593a0;transform:scaleX(0.8041)">Reach</span>
<span class="t" style="left:347.10px;top:493.27px;font-size:9.6px;font-weight:400;color:#8593a0;transform:scaleX(0.8933)">Impressions</span>
<span class="t" style="left:667.90px;top:493.27px;font-size:9.6px;font-weight:400;color:#8593a0;transform:scaleX(0.8919)">Viral impressions</span>
<span class="t" style="left:767.50px;top:493.27px;font-size:9.6px;font-weight:400;color:#8593a0;transform:scaleX(0.8869)">Paid impressions</span>
<span class="t" style="left:331.40px;top:587.56px;font-size:8.2px;font-weight:700;color:#8499a9;transform:scaleX(0.9447)">40K</span>
<span class="t" style="left:331.40px;top:630.36px;font-size:8.2px;font-weight:700;color:#8499a9;transform:scaleX(0.9447)">30K</span>
<span class="t" style="left:331.40px;top:673.16px;font-size:8.2px;font-weight:700;color:#8499a9;transform:scaleX(0.9447)">20K</span>
<span class="t" style="left:331.40px;top:715.96px;font-size:8.2px;font-weight:700;color:#8499a9;transform:scaleX(0.9447)">10K</span>
<span class="t" style="left:336.45px;top:758.76px;font-size:8.2px;font-weight:700;color:#8499a9;transform:scaleX(0.8986)">0</span>
<span class="t" style="left:139.60px;top:192.98px;font-size:9.0px;font-weight:700;color:#fff;transform:scaleX(1.2000)">f</span>
<span class="t" style="left:349.20px;top:192.98px;font-size:9.0px;font-weight:700;color:#fff;transform:scaleX(1.2000)">f</span>
<span class="t" style="left:554.00px;top:192.98px;font-size:9.0px;font-weight:700;color:#fff;transform:scaleX(1.2000)">f</span>
<span class="t" style="left:759.70px;top:192.98px;font-size:9.0px;font-weight:700;color:#fff;transform:scaleX(1.2000)">f</span>
<span class="t" style="left:172.30px;top:193.81px;font-size:6.6px;font-weight:700;color:#fff;transform:scaleX(1.1234)">in</span>
<span class="t" style="left:364.90px;top:193.81px;font-size:6.6px;font-weight:700;color:#fff;transform:scaleX(1.1234)">in</span>
</div>
</body>
</html>
